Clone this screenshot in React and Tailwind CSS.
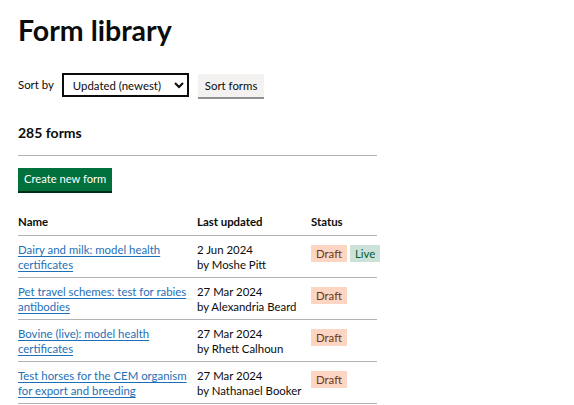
import React from 'react';

const forms = [
  { name: 'Dairy and milk: model health certificates', date: '2 Jun 2024', by: 'Moshe Pitt', live: true },
  { name: 'Pet travel schemes: test for rabies antibodies', date: '27 Mar 2024', by: 'Alexandria Beard' },
  { name: 'Bovine (live): model health certificates', date: '27 Mar 2024', by: 'Rhett Calhoun' },
  { name: 'Test horses for the CEM organism for export and breeding', date: '27 Mar 2024', by: 'Nathanael Booker' },
];

export default function App() {
  return (
    <div className="min-h-screen bg-white text-[#0b0c0c] px-[18px] pt-[13px]" style={{ fontFamily: 'Lato, Arial, sans-serif' }}>
      <h1 className="text-[28.5px] leading-[34px] font-bold">Form library</h1>

      {/* Sorting */}
      <div className="mt-[26px] flex items-center h-[24px]">
        <label className="text-[11.4px] mr-[8px]">Sort by</label>
        <select className="w-[127px] h-[24px] border-2 border-[#0b0c0c] text-[11.4px] pl-[5px] pr-[2px] bg-white">
          <option>Updated (newest)</option>
        </select>
        <button className="ml-[9px] h-[23px] px-[7px] bg-[#f3f2f1] text-[11.4px] shadow-[0_2px_0_#929191] mt-[1px]">Sort forms</button>
      </div>

      <h2 className="mt-[26px] text-[14px] font-bold leading-[20px]">285 forms</h2>
      <hr className="mt-[12px] w-[359px] border-t border-[#b1b4b6]" />

      <button className="mt-[12px] h-[23px] px-[6px] bg-[#00703c] text-white text-[11.2px] shadow-[0_2px_0_#002d18]">Create new form</button>

      {/* Table */}
      <table className="mt-[23px] w-[359px] table-fixed text-[11.4px] leading-[15px] border-collapse">
        <colgroup>
          <col className="w-[179px]" />
          <col className="w-[114px]" />
          <col />
        </colgroup>
        <thead>
          <tr className="border-b border-[#b1b4b6]">
            <th className="text-left font-bold pb-[6px] pt-0">Name</th>
            <th className="text-left font-bold pb-[6px]">Last updated</th>
            <th className="text-left font-bold pb-[6px]">Status</th>
          </tr>
        </thead>
        <tbody>
          {forms.map((f) => (
            <tr key={f.name} className="border-b border-[#b1b4b6] align-top">
              <td className="pt-[6px] pb-[5px] pr-[2px]">
                <a href="#" className="text-[#1d70b8] underline underline-offset-2 decoration-1">{f.name}</a>
              </td>
              <td className="pt-[6px] pb-[5px] whitespace-nowrap">
                {f.date}
                <br />
                by {f.by}
              </td>
              <td className="pt-[9px] pb-[5px]">
                <div className="flex gap-[3px]">
                  <span className="bg-[#fcd6c3] text-[#6e3619] px-[5px] h-[17px] leading-[17px]">Draft</span>
                  {f.live && <span className="bg-[#cce2d8] text-[#005a30] px-[5px] h-[17px] leading-[17px]">Live</span>}
                </div>
              </td>
            </tr>
          ))}
        </tbody>
      </table>
    </div>
  );
}
